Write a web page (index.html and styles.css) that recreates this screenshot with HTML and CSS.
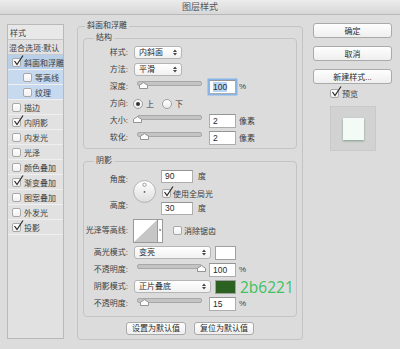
FILE: index.html
```html
<!DOCTYPE html>
<html lang="zh-CN">

<head>
    <meta charset="UTF-8">
    <meta name="viewport" content="width=device-width, initial-scale=1.0">
    <title>图层样式</title>
    <link rel="stylesheet" href="styles.css">
</head>

<body>
    <div class="titlebar">图层样式</div>

    <div class="dialog">
        <!-- left list of effects -->
        <div class="sidebar">
            <div class="side-head">样式</div>
            <div class="side-row">混合选项:默认</div>
            <div class="side-item current"><span class="cb on"><svg viewBox="0 0 11 11"><path d="M1.5 6 4 9.5 10 .5"/></svg></span>斜面和浮雕</div>
            <div class="side-item sub"><span class="cb"></span>等高线</div>
            <div class="side-item sub"><span class="cb"></span>纹理</div>
            <div class="side-item"><span class="cb"></span>描边</div>
            <div class="side-item"><span class="cb on"><svg viewBox="0 0 11 11"><path d="M1.5 6 4 9.5 10 .5"/></svg></span>内阴影</div>
            <div class="side-item"><span class="cb"></span>内发光</div>
            <div class="side-item"><span class="cb"></span>光泽</div>
            <div class="side-item"><span class="cb"></span>颜色叠加</div>
            <div class="side-item"><span class="cb on"><svg viewBox="0 0 11 11"><path d="M1.5 6 4 9.5 10 .5"/></svg></span>渐变叠加</div>
            <div class="side-item"><span class="cb"></span>图案叠加</div>
            <div class="side-item"><span class="cb"></span>外发光</div>
            <div class="side-item"><span class="cb on"><svg viewBox="0 0 11 11"><path d="M1.5 6 4 9.5 10 .5"/></svg></span>投影</div>
        </div>

        <fieldset class="group">
            <legend>斜面和浮雕</legend>

            <fieldset class="box">
                <legend>结构</legend>
                <div class="row">
                    <span class="lbl">样式:</span>
                    <div class="select">内斜面<svg class="arr" viewBox="0 0 4 7"><path d="M0 3 2 .5 4 3zM0 4 2 6.5 4 4z"/></svg></div>
                </div>
                <div class="row">
                    <span class="lbl">方法:</span>
                    <div class="select">平滑<svg class="arr" viewBox="0 0 4 7"><path d="M0 3 2 .5 4 3zM0 4 2 6.5 4 4z"/></svg></div>
                </div>
                <div class="row">
                    <span class="lbl">深度:</span>
                    <div class="slider"><svg class="thumb" style="left:2px" viewBox="0 0 9 7"><path d="M.5 6.5V3.2L4.5.6l4 2.6v3.3z"/></svg></div>
                    <span class="field focus"><span class="sel">100</span></span>
                    <span class="unit">%</span>
                </div>
                <div class="row">
                    <span class="lbl">方向:</span>
                    <span class="radio on"></span><span class="opt">上</span>
                    <span class="radio"></span><span class="opt">下</span>
                </div>
                <div class="row">
                    <span class="lbl">大小:</span>
                    <div class="slider"><svg class="thumb" style="left:-4px" viewBox="0 0 9 7"><path d="M.5 6.5V3.2L4.5.6l4 2.6v3.3z"/></svg></div>
                    <span class="field">2</span>
                    <span class="unit">像素</span>
                </div>
                <div class="row">
                    <span class="lbl">软化:</span>
                    <div class="slider"><svg class="thumb" style="left:3px" viewBox="0 0 9 7"><path d="M.5 6.5V3.2L4.5.6l4 2.6v3.3z"/></svg></div>
                    <span class="field">2</span>
                    <span class="unit">像素</span>
                </div>
            </fieldset>

            <fieldset class="box shade">
                <legend>阴影</legend>
                <div class="angle">
                    <div class="angle-lbls">
                        <span class="lbl">角度:</span>
                        <span class="lbl">高度:</span>
                    </div>
                    <svg class="dial" viewBox="0 0 24 24">
                        <defs>
                            <linearGradient id="dialfill" x1="0" y1="0" x2="0" y2="1">
                                <stop offset="0" stop-color="#ffffff"/>
                                <stop offset="1" stop-color="#dedede"/>
                            </linearGradient>
                        </defs>
                        <circle cx="12" cy="12" r="11.4" fill="url(#dialfill)" stroke="#a3a3a3" stroke-width=".8"/>
                        <circle cx="12" cy="5" r="1.7" fill="#fff" stroke="#777" stroke-width=".7"/>
                        <circle cx="12" cy="12.5" r=".9" fill="#555"/>
                    </svg>
                    <div class="angle-fields">
                        <div class="af"><span class="field wide">90</span><span class="unit">度</span></div>
                        <div class="af mid"><span class="cb on"><svg viewBox="0 0 11 11"><path d="M1.5 6 4 9.5 10 .5"/></svg></span><span>使用全局光</span></div>
                        <div class="af last"><span class="field wide">30</span><span class="unit">度</span></div>
                    </div>
                </div>

                <div class="row contour-row">
                    <span class="lbl">光泽等高线:</span>
                    <svg class="contour" viewBox="0 0 30 24">
                        <rect x=".5" y=".5" width="29" height="23" fill="#fff" stroke="#9a9a9a"/>
                        <path d="M1 23 24 1V23z" fill="#c6c6c6"/>
                        <path d="M24.5 .5V23.5" stroke="#9a9a9a" fill="none"/>
                        <path d="M25.8 10.5h2.6l-1.3 1.6z" fill="#333"/>
                    </svg>
                    <span class="cb"></span><span class="opt">消除锯齿</span>
                </div>

                <div class="modes">
                    <div class="row">
                        <span class="lbl">高光模式:</span>
                        <div class="select wide">变亮<svg class="arr" viewBox="0 0 4 7"><path d="M0 3 2 .5 4 3zM0 4 2 6.5 4 4z"/></svg></div>
                        <span class="swatch light"></span>
                    </div>
                    <div class="row">
                        <span class="lbl">不透明度:</span>
                        <div class="slider"><svg class="thumb" style="left:60px" viewBox="0 0 9 7"><path d="M.5 6.5V3.2L4.5.6l4 2.6v3.3z"/></svg></div>
                        <span class="field">100</span>
                        <span class="unit">%</span>
                    </div>
                    <div class="row">
                        <span class="lbl">阴影模式:</span>
                        <div class="select wide">正片叠底<svg class="arr" viewBox="0 0 4 7"><path d="M0 3 2 .5 4 3zM0 4 2 6.5 4 4z"/></svg></div>
                        <span class="swatch dark"></span>
                        <span class="hex">2b6221</span>
                    </div>
                    <div class="row">
                        <span class="lbl">不透明度:</span>
                        <div class="slider"><svg class="thumb" style="left:3px" viewBox="0 0 9 7"><path d="M.5 6.5V3.2L4.5.6l4 2.6v3.3z"/></svg></div>
                        <span class="field">15</span>
                        <span class="unit">%</span>
                    </div>
                </div>
            </fieldset>

            <div class="defaults">
                <button class="btn small">设置为默认值</button>
                <button class="btn small">复位为默认值</button>
            </div>
        </fieldset>

        <div class="actions">
            <button class="btn">确定</button>
            <button class="btn">取消</button>
            <button class="btn">新建样式...</button>
            <div class="preview-toggle"><span class="cb on"><svg viewBox="0 0 11 11"><path d="M1.5 6 4 9.5 10 .5"/></svg></span>预览</div>
            <div class="preview"><i></i></div>
        </div>
    </div>
</body>

</html>
```

FILE: styles.css
```css
* {
    box-sizing: border-box;
}

body {
    margin: 0;
    width: 400px;
    height: 349px;
    overflow: hidden;
    background: #dcdcdc;
    font-family: "Liberation Sans", "Noto Sans CJK SC", sans-serif;
    font-size: 8px;
    color: #3d3d3d;
}

.titlebar {
    height: 15px;
    line-height: 14px;
    text-align: center;
    font-size: 9px;
    color: #555;
    background: linear-gradient(#ececec, #d7d7d7);
    border-bottom: 1px solid #b8b8b8;
}

.dialog {
    display: flex;
    align-items: flex-start;
    padding: 6px 0 0 7px;
}

/* left list */
.sidebar {
    width: 57px;
    height: 315px;
    margin-top: 3px;
    background: #e1e1e1;
    border: 1px solid #b9b9b9;
}

.side-head,
.side-row,
.side-item {
    display: flex;
    align-items: center;
    height: 15px;
    white-space: nowrap;
    border-bottom: 1px solid #efefef;
}

.side-head {
    padding-left: 2px;
    background: #e8e8e8;
    border-bottom-color: #c6c6c6;
}

.side-row {
    padding-left: 1px;
    border-bottom-color: #c9c9c9;
}

.side-item {
    gap: 3px;
    padding-left: 4px;
}

.side-item.sub {
    padding-left: 15px;
    background: #c6d9ee;
}

.side-item.current {
    background: #b7cfe9;
}

/* checkbox + radio */
.cb {
    position: relative;
    flex: none;
    width: 9px;
    height: 9px;
    background: linear-gradient(#fff, #f1f1f1);
    border: 1px solid #a8a8a8;
    border-radius: 2px;
}

.cb svg {
    position: absolute;
    left: 0;
    top: -4px;
    width: 11px;
    height: 11px;
    fill: none;
    stroke: #262626;
    stroke-width: 1.2;
}

.radio {
    position: relative;
    flex: none;
    width: 10px;
    height: 10px;
    margin-left: -1px;
    border-radius: 50%;
    border: 1px solid #a0a0a0;
    background: linear-gradient(#fff, #ececec);
}

.radio.on::after {
    content: "";
    position: absolute;
    left: 2px;
    top: 2px;
    width: 4px;
    height: 4px;
    border-radius: 50%;
    background: #333;
}

.opt {
    margin: 0 9px 0 3px;
}

/* group boxes */
.group {
    width: 226px;
    margin: 0 0 0 13px;
    padding: 0 5px 4px;
    min-width: 0;
    border: 1px solid #c3c3c3;
    border-radius: 4px;
}

.group > legend {
    margin-left: 2px;
    padding: 0 2px;
    line-height: 10px;
}

.box {
    margin: 2px 0 0;
    padding: 1px 0 2px;
    min-width: 0;
    border: 1px solid #c4c4c4;
    border-radius: 4px;
}

.box > legend {
    margin-left: 10px;
    padding: 0 2px;
    line-height: 10px;
}

.box.shade {
    margin-top: 7px;
    padding-bottom: 4px;
}

.row {
    display: flex;
    align-items: center;
    height: 17px;
}

.lbl {
    flex: none;
    width: 44px;
    margin-right: 6px;
    text-align: right;
    white-space: nowrap;
    line-height: 10px;
}

.select {
    position: relative;
    flex: none;
    width: 48px;
    height: 13px;
    padding-left: 4px;
    line-height: 11px;
    border: 1px solid #b5b5b5;
    border-radius: 3px;
    background: linear-gradient(#ffffff, #f1f1f1);
    color: #2a2a2a;
}

.select.wide {
    width: 77px;
}

.arr {
    position: absolute;
    right: 4px;
    top: 2px;
    width: 4px;
    height: 7px;
    fill: #444;
}

.slider {
    position: relative;
    flex: none;
    align-self: flex-start;
    width: 65px;
    height: 9px;
    margin: 3px 7px 0 3px;
}

.slider::before {
    content: "";
    position: absolute;
    left: 0;
    right: 0;
    top: 0;
    height: 3px;
    border-radius: 2px;
    background: #c4c4c4;
    border: 1px solid #a8a8a8;
}

.thumb {
    position: absolute;
    top: 1px;
    width: 9px;
    height: 7px;
    fill: #fdfdfd;
    stroke: #8a8a8a;
    stroke-width: .9;
}

.field {
    flex: none;
    width: 27px;
    height: 14px;
    padding-left: 3px;
    font-size: 8.5px;
    line-height: 12px;
    color: #2a2a2a;
    background: #fff;
    border: 1px solid #adadad;
    border-top-color: #959595;
}

.field.wide {
    width: 32px;
    height: 13px;
    line-height: 11px;
}

.field.focus {
    box-shadow: 0 0 0 1.5px #86b4ea;
}

.sel {
    background: #b5d5f8;
}

.unit {
    margin-left: 3px;
}

/* shadow part */
.angle {
    display: flex;
    height: 51px;
    padding-top: 3px;
}

.angle-lbls {
    display: flex;
    flex-direction: column;
    gap: 16px;
    width: 44px;
    padding-top: 5px;
}

.dial {
    flex: none;
    width: 23px;
    height: 23px;
    margin: 10px 0 0 5px;
}

.angle-fields {
    margin-left: 5px;
}

.af {
    display: flex;
    align-items: flex-start;
    height: 16px;
}

.af .unit {
    margin-left: 5px;
    line-height: 13px;
}

.af.mid {
    align-items: center;
    gap: 2px;
    height: 14px;
    padding-left: 1px;
}

.af.last {
    padding-top: 2px;
}

.contour-row {
    height: 23px;
    margin-top: 1px;
}

.contour {
    flex: none;
    width: 30px;
    height: 24px;
    margin: 0 10px 0 -1px;
}

.contour-row .opt {
    margin-left: 2px;
}

.modes {
    margin-top: 2px;
}

.swatch {
    flex: none;
    width: 21px;
    height: 14px;
    margin-left: 4px;
    border: 1px solid #a0a0a0;
}

.swatch.light {
    background: #fff;
}

.swatch.dark {
    background: #2b6221;
}

.hex {
    margin-left: 4px;
    font-family: "Open Sans", "Liberation Sans", sans-serif;
    font-size: 15.5px;
    line-height: 16px;
    color: #41c15f;
}

/* buttons */
.btn {
    display: block;
    height: 15px;
    padding: 0;
    font-family: inherit;
    font-size: 8px;
    color: #2a2a2a;
    background: linear-gradient(#fefefe, #efefef);
    border: 1px solid #aaaaaa;
    border-radius: 3px;
}

.defaults {
    display: flex;
    justify-content: center;
    gap: 8px;
    margin-top: 5px;
}

.btn.small {
    width: 60px;
    height: 13px;
    line-height: 11px;
}

.actions {
    display: flex;
    flex-direction: column;
    width: 79px;
    margin: 2px 0 0 10px;
}

.actions .btn + .btn {
    margin-top: 8px;
}

.preview-toggle {
    display: flex;
    align-items: center;
    gap: 3px;
    height: 10px;
    margin: 4px 0 0 17px;
}

.preview {
    display: flex;
    align-items: center;
    justify-content: center;
    width: 46px;
    height: 45px;
    margin: 8px 0 0 17px;
    background: #d2d2d2;
    border: 1px solid #c9c9c9;
}

.preview i {
    width: 21px;
    height: 22px;
    background: #f4faf6;
    box-shadow: 0 1px 2px rgba(30, 90, 50, .45);
}
```
